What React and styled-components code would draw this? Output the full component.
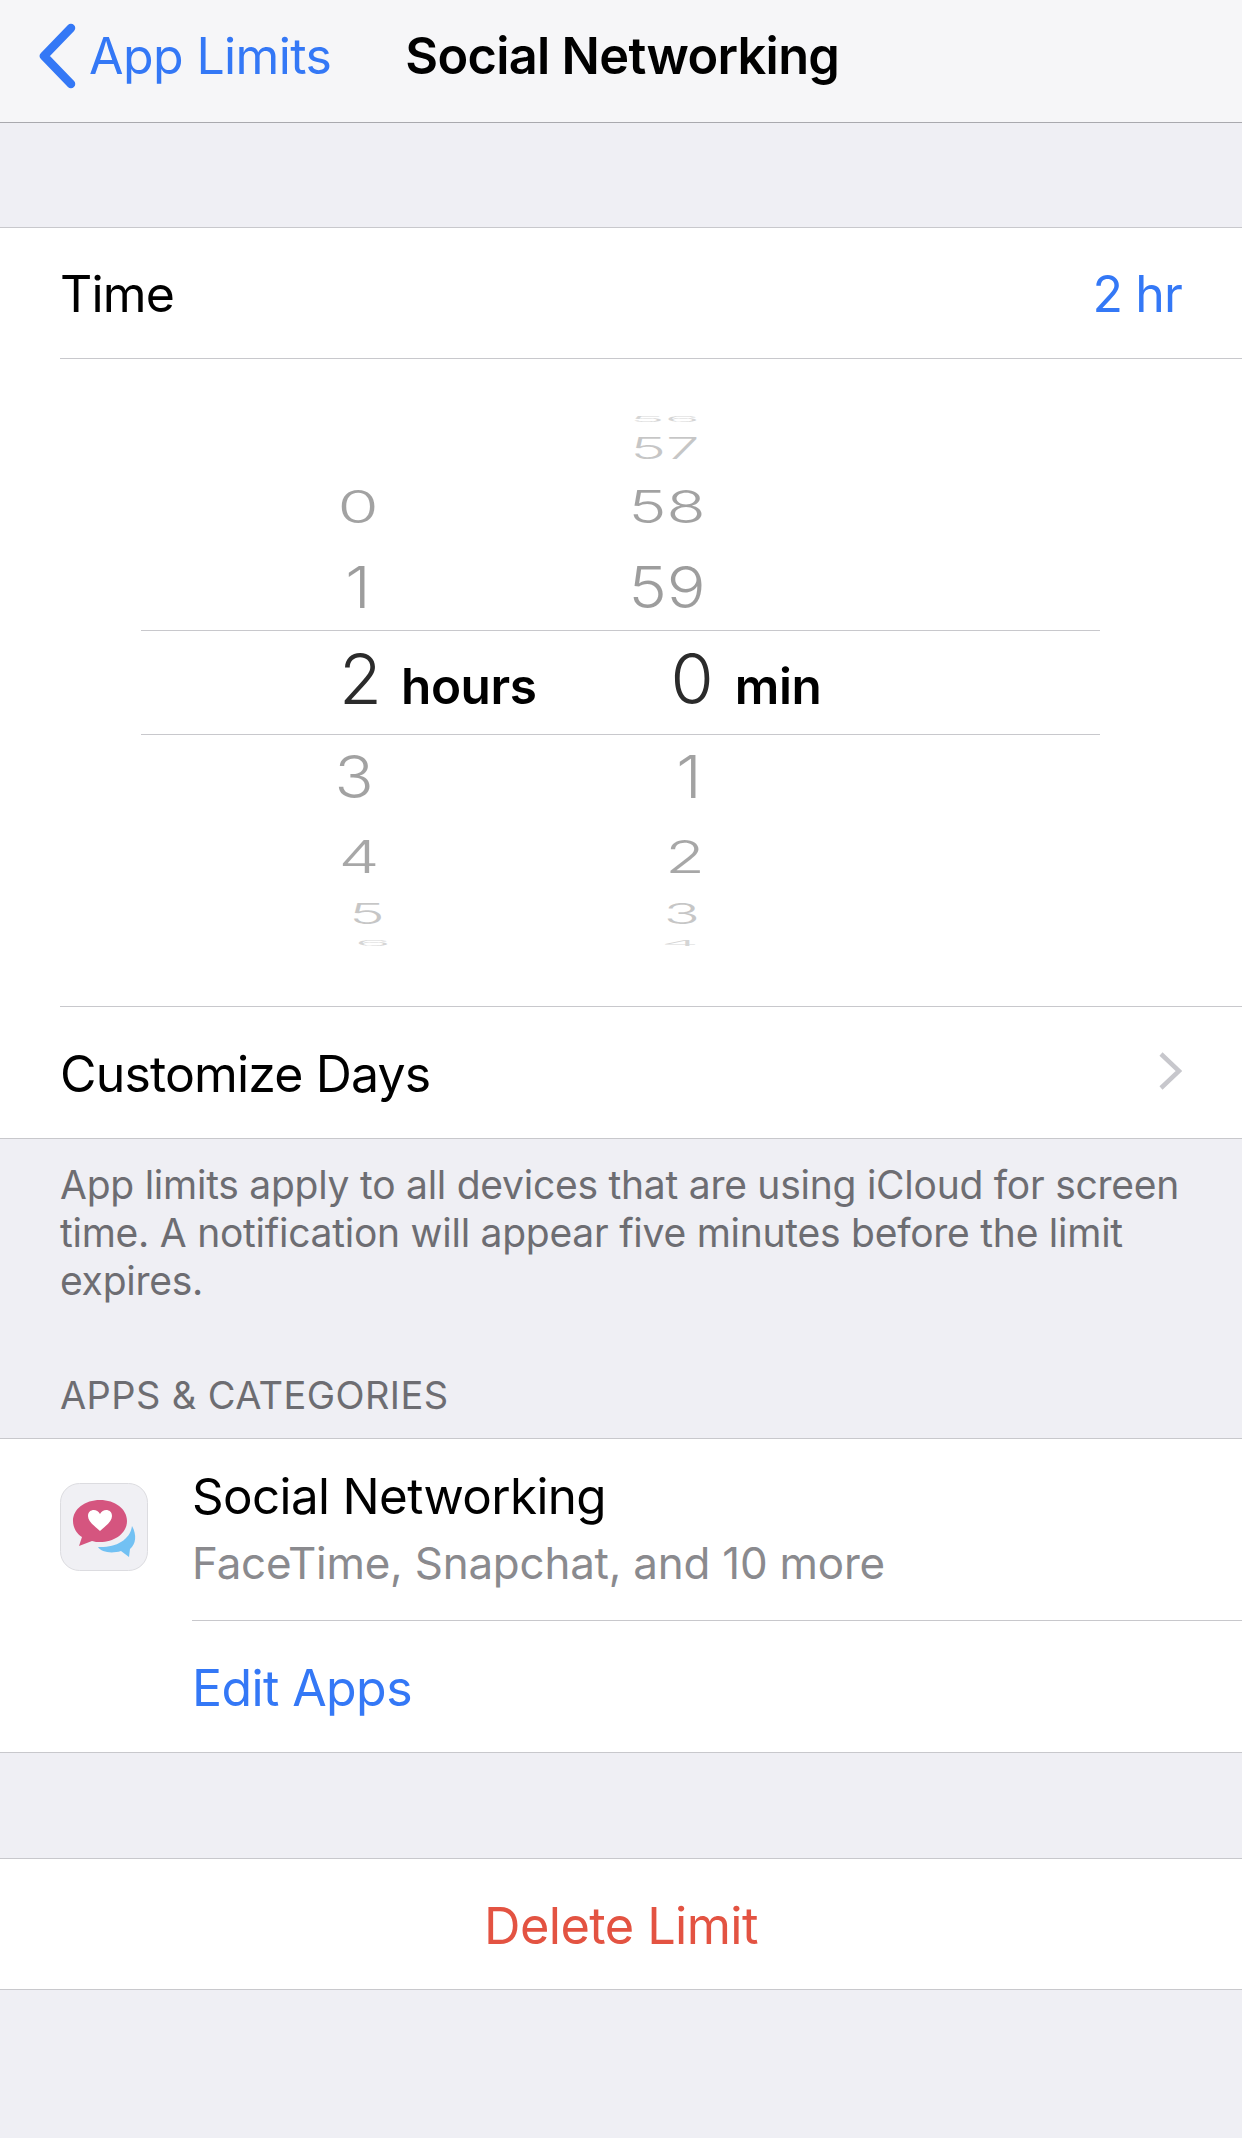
import React from 'react';
import styled, { createGlobalStyle } from 'styled-components';

const GlobalStyle = createGlobalStyle`
  html, body {
    margin: 0;
    padding: 0;
    background: #efeff4;
    font-family: Inter, "Liberation Sans", sans-serif;
    -webkit-font-smoothing: antialiased;
  }
`;

const Page = styled.div`
  width: 1242px;
  height: 2138px;
  overflow: hidden;
  background: #efeff4;
`;

const NavBar = styled.header`
  height: 123px;
  box-sizing: border-box;
  padding: 0 0 11px 38px;
  display: flex;
  align-items: center;
  background: #f6f6f8;
  border-bottom: 1px solid #a9a9ae;
`;

const BackArrow = styled.svg`
  width: 40px;
  height: 66px;
  flex: none;
`;

const BackLabel = styled.span`
  margin-left: 11px;
  font-size: 50px;
  letter-spacing: -0.6px;
  color: #3478f6;
`;

const NavTitle = styled.h1`
  margin: 0 0 0 74px;
  font-size: 50.5px;
  font-weight: 600;
  letter-spacing: -0.7px;
  color: #000;
`;

const Group = styled.section`
  margin-top: ${p => p.$top}px;
  background: #fff;
  border-top: 1px solid #c8c8cc;
  border-bottom: 1px solid #c8c8cc;
`;

const Row = styled.div`
  height: ${p => p.$height}px;
  box-sizing: border-box;
  padding: 2px 60px 0;
  display: flex;
  align-items: center;
  justify-content: space-between;
  font-size: 50px;
  letter-spacing: -0.85px;
  color: #000;
`;

const RowValue = styled.span`
  color: #3478f6;
`;

const Divider = styled.div`
  height: 1px;
  margin-left: ${p => p.$left}px;
  background: #c8c8cc;
`;

const Picker = styled.div`
  position: relative;
  height: 647px;
  display: flex;
  align-items: center;
`;

const SelectionBand = styled.div`
  width: 959px;
  height: 103px;
  margin-left: 141px;
  display: flex;
  align-items: center;
  border-top: 1px solid #c8c8cc;
  border-bottom: 1px solid #c8c8cc;
`;

const SelectedValue = styled.span`
  margin-left: ${p => p.$left}px;
  font-size: 70px;
  font-weight: 300;
  line-height: 1;
  color: #2b2b2b;
  transform: translateY(-4px);
`;

const SelectedUnit = styled.span`
  margin-left: ${p => p.$left}px;
  font-size: 49.5px;
  font-weight: 600;
  letter-spacing: -0.4px;
  color: #000;
  transform: translateY(3px);
`;

const Digit = styled.span`
  position: absolute;
  left: ${p => p.$x}px;
  top: ${p => p.$y}px;
  font-size: 68px;
  font-weight: 300;
  line-height: 1;
  white-space: nowrap;
  color: #000;
  opacity: ${p => p.$alpha};
  transform: translate(-50%, -50%) scale(${p => p.$sx}, ${p => p.$sy});
`;

const FooterNote = styled.p`
  margin: 0;
  padding: 22px 50px 0 60px;
  font-size: 39px;
  line-height: 48px;
  letter-spacing: -0.25px;
  color: #6d6d72;
`;

const SectionLabel = styled.h2`
  margin: 0;
  padding: 68px 60px 21px;
  font-size: 38px;
  line-height: 44px;
  font-weight: 400;
  letter-spacing: 0.4px;
  color: #6d6d72;
`;

const AppRow = styled.div`
  height: 181px;
  display: flex;
  padding-left: 60px;
`;

const AppIcon = styled.svg`
  width: 88px;
  height: 88px;
  margin-top: 44px;
  flex: none;
`;

const AppText = styled.div`
  margin-left: 44px;
  padding-top: 27px;
`;

const AppName = styled.div`
  font-size: 49.3px;
  line-height: 60px;
  letter-spacing: -0.6px;
  color: #000;
`;

const AppDetail = styled.div`
  margin-top: 12px;
  font-size: 43.9px;
  line-height: 50px;
  letter-spacing: -0.2px;
  color: #8a8a8e;
`;

const LinkRow = styled.div`
  height: 131px;
  box-sizing: border-box;
  padding: 3px 0 0 192px;
  display: flex;
  align-items: center;
  font-size: 50px;
  letter-spacing: -0.6px;
  color: #3478f6;
`;

const DeleteRow = styled.div`
  height: 130px;
  box-sizing: border-box;
  padding-top: 2px;
  display: flex;
  align-items: center;
  justify-content: center;
  font-size: 50.5px;
  letter-spacing: -0.6px;
  color: #e35342;
`;

const Chevron = styled.svg`
  width: 26px;
  height: 40px;
  margin-top: -5px;
`;

// wheel digits relative to the picker: x, y, scale and fade of each rotated row
const wheelDigits = [
  { text: '0', x: 358, y: 147, sx: 0.98, sy: 0.66, alpha: 0.36 },
  { text: '1', x: 358, y: 228, sx: 0.95, sy: 0.84, alpha: 0.38 },
  { text: '3', x: 354, y: 417, sx: 0.95, sy: 0.86, alpha: 0.36 },
  { text: '4', x: 359, y: 497, sx: 0.95, sy: 0.66, alpha: 0.34 },
  { text: '5', x: 367, y: 555, sx: 0.88, sy: 0.42, alpha: 0.22 },
  { text: '6', x: 373, y: 584, sx: 0.88, sy: 0.12, alpha: 0.16 },
  { text: '56', x: 665, y: 60, sx: 0.86, sy: 0.12, alpha: 0.16 },
  { text: '57', x: 665, y: 89, sx: 0.88, sy: 0.44, alpha: 0.22 },
  { text: '58', x: 667, y: 147, sx: 0.94, sy: 0.66, alpha: 0.36 },
  { text: '59', x: 667, y: 228, sx: 0.95, sy: 0.84, alpha: 0.38 },
  { text: '1', x: 689, y: 417, sx: 0.95, sy: 0.86, alpha: 0.36 },
  { text: '2', x: 685, y: 497, sx: 0.95, sy: 0.66, alpha: 0.34 },
  { text: '3', x: 682, y: 555, sx: 0.88, sy: 0.42, alpha: 0.22 },
  { text: '4', x: 680, y: 584, sx: 0.88, sy: 0.12, alpha: 0.16 },
];

function App() {
  return (
    <Page>
      <GlobalStyle />
      <NavBar>
        <BackArrow viewBox="0 0 40 66">
          <path d="M33 5 L6 33 L33 61" fill="none" stroke="#3478f6" strokeWidth="8.5" strokeLinecap="round" strokeLinejoin="round" />
        </BackArrow>
        <BackLabel>App Limits</BackLabel>
        <NavTitle>Social Networking</NavTitle>
      </NavBar>

      <Group $top={104}>
        <Row $height={130}>
          <span>Time</span>
          <RowValue>2 hr</RowValue>
        </Row>
        <Divider $left={60} />
        <Picker>
          {wheelDigits.map(d => (
            <Digit key={d.text + d.x} $x={d.x} $y={d.y} $sx={d.sx} $sy={d.sy} $alpha={d.alpha}>
              {d.text}
            </Digit>
          ))}
          <SelectionBand>
            <SelectedValue $left={198}>2</SelectedValue>
            <SelectedUnit $left={19}>hours</SelectedUnit>
            <SelectedValue $left={134}>0</SelectedValue>
            <SelectedUnit $left={21}>min</SelectedUnit>
          </SelectionBand>
        </Picker>
        <Divider $left={60} />
        <Row $height={131}>
          <span>Customize Days</span>
          <Chevron viewBox="0 0 26 40">
            <path d="M5 3 L23 20 L5 37" fill="none" stroke="#c7c7cc" strokeWidth="4.5" />
          </Chevron>
        </Row>
      </Group>

      <FooterNote>
        App limits apply to all devices that are using iCloud for screen time. A notification will appear five minutes before the limit expires.
      </FooterNote>
      <SectionLabel>APPS &amp; CATEGORIES</SectionLabel>

      <Group $top={0}>
        <AppRow>
          <AppIcon viewBox="0 0 88 88">
            <rect x="0.5" y="0.5" width="87" height="87" rx="19" fill="#f0f0f4" stroke="#dcdce0" />
            <path d="M72 43 C77 52 76 61 70 66 L69 74 L61 68 C51 71 41 69 38 64 C54 65 70 58 72 43 Z" fill="#72c1f3" />
            <path d="M40 17 C25 17 13 26 13 38 C13 45 17 51 22 54 L19 63 L32 58 C35 59 37 59 40 59 C55 59 67 50 67 38 C67 26 55 17 40 17 Z" fill="#d5557f" />
            <path d="M40 48 C33 42 28 38 28 33 C28 26 37 25 40 31 C43 25 52 26 52 33 C52 38 47 42 40 48 Z" fill="#fff" />
          </AppIcon>
          <AppText>
            <AppName>Social Networking</AppName>
            <AppDetail>FaceTime, Snapchat, and 10 more</AppDetail>
          </AppText>
        </AppRow>
        <Divider $left={192} />
        <LinkRow>Edit Apps</LinkRow>
      </Group>

      <Group $top={105}>
        <DeleteRow>Delete Limit</DeleteRow>
      </Group>
    </Page>
  );
}

export default App;
